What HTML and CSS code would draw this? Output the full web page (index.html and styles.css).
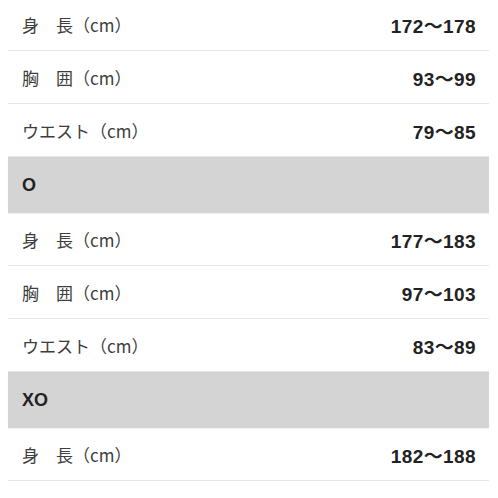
FILE: index.html
```html
<!DOCTYPE html>
<html lang="ja">
<head>
<meta charset="utf-8">
<link rel="stylesheet" href="styles.css">
</head>
<body>
<div class="table">
  <div class="row"><span class="label">身　長（cm）</span><span class="value">172〜178</span></div>
  <div class="row"><span class="label">胸　囲（cm）</span><span class="value">93〜99</span></div>
  <div class="row"><span class="label">ウエスト（cm）</span><span class="value">79〜85</span></div>
  <div class="head">O</div>
  <div class="row"><span class="label">身　長（cm）</span><span class="value">177〜183</span></div>
  <div class="row"><span class="label">胸　囲（cm）</span><span class="value">97〜103</span></div>
  <div class="row"><span class="label">ウエスト（cm）</span><span class="value">83〜89</span></div>
  <div class="head">XO</div>
  <div class="row"><span class="label">身　長（cm）</span><span class="value">182〜188</span></div>
  <div class="row"><span class="label">胸　囲（cm）</span><span class="value">101〜107</span></div>
</div>
</body>
</html>
```
FILE: styles.css
```css
html, body {
  margin: 0;
  padding: 0;
  background: #ffffff;
}
body {
  font-family: "Liberation Sans", "Noto Sans CJK JP", sans-serif;
  color: #333333;
}
.table {
  margin: -2px 9px 0 8px;
  display: flex;
  flex-direction: column;
}
.row {
  height: 52px;
  border-bottom: 1px solid #e6e6e6;
  display: flex;
  align-items: center;
  justify-content: space-between;
  padding: 0 13px 0 14px;
}
.label {
  font-family: "Noto Sans CJK JP", sans-serif;
  font-size: 17px;
  color: #3d3d3d;
}
.value {
  font-family: "Liberation Sans", "Noto Sans CJK JP", sans-serif;
  font-weight: bold;
  font-size: 19px;
  color: #222222;
  letter-spacing: 0.4px;
}
.head {
  height: 56px;
  background: #d4d4d4;
  display: flex;
  align-items: center;
  padding: 0 14px;
  font-family: "Liberation Sans", sans-serif;
  font-weight: bold;
  font-size: 18px;
  color: #222222;
  box-shadow: 0 1px 1px rgba(0,0,0,0.06);
}
```
